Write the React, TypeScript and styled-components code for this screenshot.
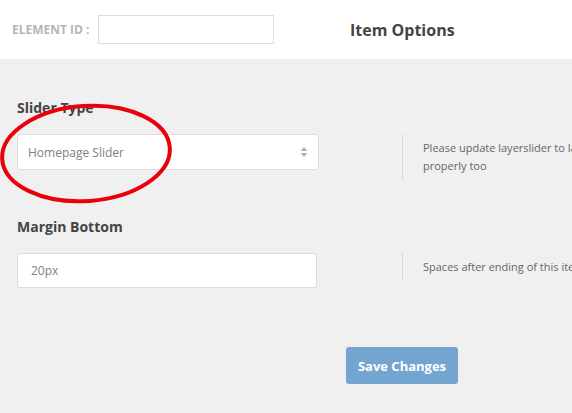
import React from 'react'
import styled, { createGlobalStyle } from 'styled-components'

const GlobalStyle = createGlobalStyle`
  html, body {
    margin: 0;
    padding: 0;
    background-color: #f0f0f0;
    overflow: hidden;
  }
  body {
    font-family: 'Open Sans', 'Liberation Sans', sans-serif;
    color: #444;
  }
  * {
    box-sizing: border-box;
  }
`

const Page = styled.div`
  position: relative;
  width: 572px;
  height: 413px;
  overflow: hidden;
`
const Header = styled.div`
  display: flex;
  align-items: center;
  height: 59px;
  padding-left: 12px;
  background-color: #fff;
`
const IdLabel = styled.label`
  font-size: 12px;
  font-weight: 700;
  color: #b5b5b5;
  text-transform: uppercase;
  width: 86px;
`
const IdInput = styled.input`
  width: 176px;
  height: 29px;
  border: 1px solid #ddd;
  background: #fff;
  margin: 0;
`
const Title = styled.h2`
  margin: 0 0 0 76px;
  font-size: 16px;
  font-weight: 700;
  color: #444;
`
const Content = styled.div`
  padding: 39px 0 0 17px;
`
const Field = styled.div`
  margin-bottom: 37px;
`
const Label = styled.div`
  font-size: 14px;
  font-weight: 700;
  line-height: 20px;
  color: #444;
  margin-bottom: 16px;
`
const Row = styled.div`
  display: flex;
  align-items: flex-start;
  width: 800px;
`
const Control = styled.div<{ $w: number; $h: number }>`
  position: relative;
  flex: 0 0 ${(p) => p.$w}px;
  height: ${(p) => p.$h}px;
  display: flex;
  align-items: center;
  padding-left: ${(p) => (p.$h > 35 ? 10 : 13)}px;
  background: #fff;
  border: 1px solid #dcdcdc;
  border-radius: 3px;
  font-size: 12px;
  color: #808080;
`
const Arrows = styled.svg`
  position: absolute;
  right: 10px;
  top: 50%;
  transform: translateY(-50%);
`
const Help = styled.div<{ $offset: number }>`
  margin-left: ${(p) => p.$offset}px;
  padding: 5px 0 5px 20px;
  border-left: 1px solid #dadada;
  font-size: 11px;
  line-height: 18px;
  color: #666;
  width: 340px;
`
const Footer = styled.div`
  padding-left: 329px;
  padding-top: 22px;
`
const Button = styled.button`
  width: 112px;
  height: 37px;
  border: none;
  border-radius: 3px;
  background-color: #74a5d1;
  color: #fff;
  font-family: 'Open Sans', 'Liberation Sans', sans-serif;
  font-size: 13px;
  font-weight: 700;
`
const Circle = styled.svg`
  position: absolute;
  left: 0;
  top: 100px;
  pointer-events: none;
`

function App() {
  return (
    <>
      <GlobalStyle />
      <Page>
        <Header>
          <IdLabel>Element ID :</IdLabel>
          <IdInput />
          <Title>Item Options</Title>
        </Header>
        <Content>
          <Field>
            <Label>Slider Type</Label>
            <Row>
              <Control $w={302} $h={36}>
                Homepage Slider
                <Arrows width="8" height="12" viewBox="0 0 8 12">
                  <path d="M4 1 L7 5 L1 5 Z" fill="#aaa" />
                  <path d="M4 11 L7 7 L1 7 Z" fill="#aaa" />
                </Arrows>
              </Control>
              <Help $offset={83}>
                Please update layerslider to latest version to make it work
                properly too
              </Help>
            </Row>
          </Field>
          <Field>
            <Label>Margin Bottom</Label>
            <Row>
              <Control $w={300} $h={35}>20px</Control>
              <Help $offset={85}>Spaces after ending of this item</Help>
            </Row>
          </Field>
          <Footer>
            <Button>Save Changes</Button>
          </Footer>
        </Content>
        <Circle width="180" height="110" viewBox="0 0 180 110">
          <ellipse
            cx="86"
            cy="53.5"
            rx="84"
            ry="47.5"
            transform="rotate(-4 86 53.5)"
            fill="none"
            stroke="#e8000b"
            strokeWidth="4"
          />
        </Circle>
      </Page>
    </>
  )
}

export default App
